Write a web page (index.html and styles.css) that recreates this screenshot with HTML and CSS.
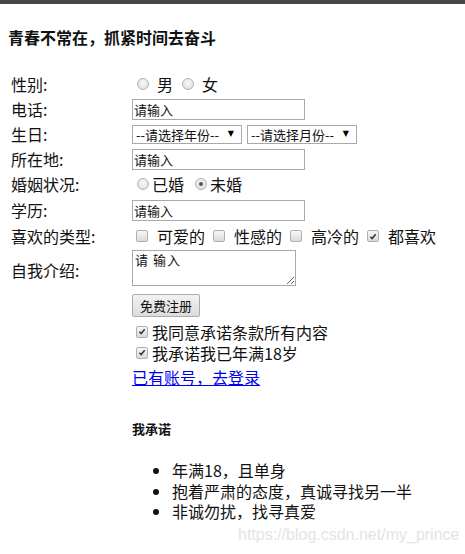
FILE: index.html
```html
<!DOCTYPE html>
<html lang="zh-CN">
<head>
<meta charset="utf-8">
<title>注册</title>
<link rel="stylesheet" href="styles.css">
</head>
<body>
<div class="topbar"></div>
<h3 class="title">青春不常在，抓紧时间去奋斗</h3>
<form class="form">
  <div class="lbl">性别:</div>
  <div class="ctl opts">
    <span class="radio"></span><span class="t g1">男</span>
    <span class="radio"></span><span class="t g1">女</span>
  </div>

  <div class="lbl">电话:</div>
  <div class="ctl"><input class="inp" type="text" value="请输入"></div>

  <div class="lbl">生日:</div>
  <div class="ctl sels">
    <span class="sel">--请选择年份--<i class="arr">▼</i></span>
    <span class="sel">--请选择月份--<i class="arr">▼</i></span>
  </div>

  <div class="lbl">所在地:</div>
  <div class="ctl"><input class="inp" type="text" value="请输入"></div>

  <div class="lbl">婚姻状况:</div>
  <div class="ctl opts">
    <span class="radio"></span><span class="t g2">已婚</span>
    <span class="radio on"></span><span class="t g2">未婚</span>
  </div>

  <div class="lbl">学历:</div>
  <div class="ctl"><input class="inp" type="text" value="请输入"></div>

  <div class="lbl">喜欢的类型:</div>
  <div class="ctl opts">
    <span class="cb"></span><span class="t g3">可爱的</span>
    <span class="cb"></span><span class="t g3">性感的</span>
    <span class="cb"></span><span class="t g3">高冷的</span>
    <span class="cb on"><svg viewBox="0 0 12 12" width="12" height="12"><path d="M3 6.2 L5 8.4 L9.2 3.4" fill="none" stroke="#333" stroke-width="1.8"/></svg></span><span class="t g3">都喜欢</span>
  </div>

  <div class="lbl">自我介绍:</div>
  <div class="ctl top"><textarea class="ta">请 输入</textarea></div>

  <div></div>
  <div class="ctl"><button type="button" class="btn">免费注册</button></div>

  <div></div>
  <div class="ctl opts">
    <span class="cb on"><svg viewBox="0 0 12 12" width="12" height="12"><path d="M3 6.2 L5 8.4 L9.2 3.4" fill="none" stroke="#333" stroke-width="1.8"/></svg></span><span class="t g4">我同意承诺条款所有内容</span>
  </div>

  <div></div>
  <div class="ctl opts">
    <span class="cb on"><svg viewBox="0 0 12 12" width="12" height="12"><path d="M3 6.2 L5 8.4 L9.2 3.4" fill="none" stroke="#333" stroke-width="1.8"/></svg></span><span class="t g4">我承诺我已年满18岁</span>
  </div>

  <div></div>
  <div class="ctl"><a class="link" href="#">已有账号，去登录</a></div>
</form>

<section class="promise">
  <h4 class="ptitle">我承诺</h4>
  <ul class="plist">
    <li>年满18，且单身</li>
    <li>抱着严肃的态度，真诚寻找另一半</li>
    <li>非诚勿扰，找寻真爱</li>
  </ul>
</section>

<div class="watermark">https://blog.csdn.net/my_prince</div>
</body>
</html>
```

FILE: styles.css
```css
* { box-sizing: border-box; }

html, body {
  margin: 0;
  padding: 0;
  background: #fff;
}

body {
  width: 465px;
  height: 554px;
  position: relative;
  overflow: hidden;
  font-family: "Noto Sans CJK SC", "Noto Sans", sans-serif;
  color: #111;
}

.topbar {
  height: 4px;
  background: #464646;
}

.title {
  margin: 23px 0 0 8px;
  font-size: 16px;
  line-height: 20px;
  font-weight: bold;
}

.form {
  margin-top: 24px;
  padding-left: 11px;
  display: grid;
  grid-template-columns: 121px auto;
  grid-template-rows: 26px 24px 26px 24px 26px 26px 26px 41px 30px 23px 19px 30px;
}

.lbl {
  font-size: 16px;
  line-height: 20px;
  align-self: center;
  white-space: nowrap;
}

.ctl {
  align-self: center;
  justify-self: start;
  display: flex;
  align-items: center;
}

.ctl.top {
  align-self: start;
  padding-top: 1px;
}

.opts .t {
  font-size: 16px;
  line-height: 18px;
  white-space: nowrap;
}

.radio {
  width: 12px;
  height: 12px;
  margin-left: 5px;
  border-radius: 50%;
  border: 1px solid #b4b4b4;
  background: radial-gradient(circle at 50% 40%, #f8f8f8 0%, #e6e6e6 60%, #d6d6d6 100%);
  display: inline-flex;
  align-items: center;
  justify-content: center;
  flex: none;
}

.radio.on::after {
  content: "";
  width: 4px;
  height: 4px;
  border-radius: 50%;
  background: #555;
}

.cb {
  width: 12px;
  height: 12px;
  margin-left: 4px;
  border: 1px solid #b0b0b0;
  border-radius: 2px;
  background: linear-gradient(#f7f7f7, #dadada);
  display: inline-flex;
  align-items: center;
  justify-content: center;
  flex: none;
}

.cb svg {
  display: block;
  width: 11px;
  height: 11px;
}

.t.g1 { margin-left: 8px; margin-right: 4px; }
.t.g2 { margin-left: 3px; margin-right: 6px; }
.t.g3 { margin-left: 9px; margin-right: 4px; }
.t.g4 { margin-left: 4px; }

.inp {
  width: 173px;
  height: 21px;
  border: 1px solid #a9a9a9;
  padding: 0 1px;
  margin: 0;
  font-family: "Noto Sans CJK SC", sans-serif;
  font-size: 13px;
  line-height: 19px;
  color: #111;
  background: #fff;
  outline: none;
}

.sels {
  gap: 5px;
}

.sel {
  position: relative;
  display: inline-flex;
  align-items: center;
  width: 110px;
  height: 19px;
  border: 1px solid #a9a9a9;
  padding-left: 3px;
  font-size: 13px;
  line-height: 17px;
  color: #111;
  background: #fff;
  white-space: nowrap;
}

.arr {
  position: absolute;
  right: 7px;
  top: 3px;
  font-style: normal;
  font-size: 8px;
  line-height: 10px;
  color: #000;
  font-family: "DejaVu Sans", sans-serif;
}

.ta {
  width: 164px;
  height: 36px;
  margin: 0;
  border: 1px solid #a9a9a9;
  padding: 1px 2px;
  font-family: "Noto Sans CJK SC", sans-serif;
  font-size: 13px;
  line-height: 16px;
  letter-spacing: 1px;
  color: #111;
  resize: both;
  outline: none;
}

.btn {
  width: 68px;
  height: 23px;
  margin: 0;
  padding: 0;
  border: 1px solid #ababab;
  border-radius: 2px;
  background: linear-gradient(#f2f2f2, #dcdcdc);
  font-family: "Noto Sans CJK SC", sans-serif;
  font-size: 13px;
  line-height: 21px;
  color: #111;
}

.link {
  font-size: 16px;
  line-height: 20px;
  color: #0000ee;
  text-decoration: underline;
}

.promise {
  margin-left: 132px;
}

.ptitle {
  margin: 29px 0 0;
  font-size: 13px;
  line-height: 16px;
  font-weight: bold;
}

.plist {
  margin: 23px 0 0;
  padding-left: 40px;
  font-size: 16px;
  line-height: 20.5px;
}

.watermark {
  position: absolute;
  left: 238px;
  top: 526px;
  font-family: "Liberation Sans", Arial, sans-serif;
  font-size: 16px;
  line-height: 18px;
  color: #e4e4e4;
  white-space: nowrap;
}
```
